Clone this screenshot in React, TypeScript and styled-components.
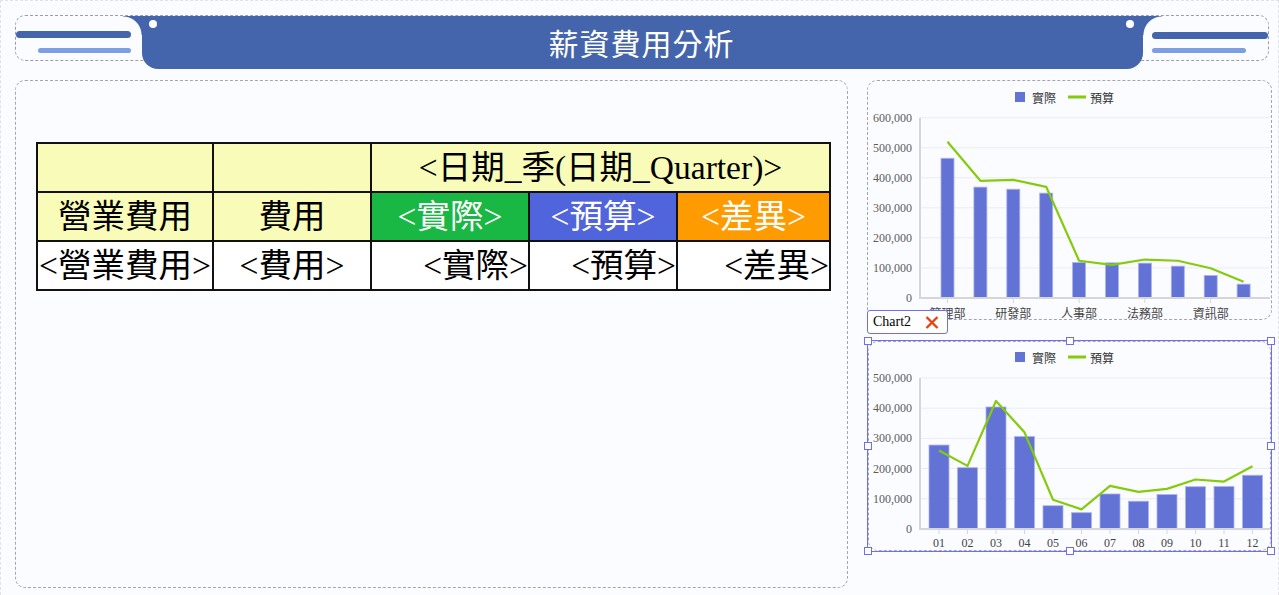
import styled, { createGlobalStyle } from "styled-components";

const GlobalStyle = createGlobalStyle`
  html, body {
    margin: 0;
    padding: 0;
    background: #fbfcff;
  }
  body {
    font-family: "Noto Sans CJK TC", "Noto Sans", sans-serif;
  }
  * {
    box-sizing: border-box;
  }
`;

const BLUE = "#4465ac";
const PAGE_BG = "#fbfcff";
const SELECT = "#6e6ef2";

const Page = styled.div`
  width: 1279px;
  height: 610px;
  border: 1px dashed #e1e1e6;
  padding: 14px 0 0 14px;
`;

const Header = styled.header`
  display: flex;
  align-items: flex-start;
  width: 1254px;
  height: 46px;
  border: 1px dashed #9c9cae;
  border-radius: 10px;
`;

const Deco = styled.div<{ $side: "left" | "right" }>`
  width: ${(p) => (p.$side === "left" ? 126 : 125)}px;
  height: 44px;
  flex: none;
  display: flex;
  flex-direction: column;
  align-items: ${(p) => (p.$side === "left" ? "flex-end" : "flex-start")};
  gap: ${(p) => (p.$side === "left" ? 10 : 9)}px;
  padding: ${(p) => (p.$side === "left" ? "15px 11px 0 0" : "16px 0 0 9px")};
  background: radial-gradient(
      circle at ${(p) => (p.$side === "left" ? "0 100%" : "100% 100%")},
      ${PAGE_BG} 18px,
      ${BLUE} 19px
    )
    ${(p) => (p.$side === "left" ? "right" : "left")} top / 19px 19px no-repeat;
`;

const DecoLine = styled.span<{ $w: number; $light?: boolean }>`
  display: block;
  width: ${(p) => p.$w}px;
  height: ${(p) => (p.$light ? 5 : 7)}px;
  border-radius: 4px;
  background: ${(p) => (p.$light ? "#7b9fe2" : BLUE)};
`;

const TitleBar = styled.div`
  width: 1001px;
  height: 53px;
  flex: none;
  display: flex;
  align-items: flex-start;
  padding: 4px 9px 0 7px;
  background: ${BLUE};
  border-radius: 0 0 16px 16px;
`;

const Dot = styled.span`
  width: 8px;
  height: 8px;
  flex: none;
  border-radius: 50%;
  background: #fff;
`;

const Title = styled.h1`
  flex: 1;
  margin: -4px 0 0;
  line-height: 53px;
  text-align: center;
  color: #fff;
  font-size: 30px;
  font-weight: 400;
  letter-spacing: 1px;
`;

const Main = styled.main`
  display: flex;
  align-items: flex-start;
  gap: 19px;
  margin-top: 19px;
`;

const ReportPanel = styled.section`
  flex: none;
  width: 833px;
  height: 508px;
  padding: 61px 0 0 20px;
  border: 1px dashed #a4a4b6;
  border-radius: 10px;
`;

const Table = styled.table`
  table-layout: fixed;
  width: 795px;
  border-collapse: separate;
  border-spacing: 0;
  border-top: 2px solid #111;
  border-left: 2px solid #111;
  font-family: "Liberation Serif", "Noto Sans CJK TC", serif;
  font-size: 33.5px;
`;

const Col = styled.col<{ $w: number }>`
  width: ${(p) => p.$w}px;
`;

type Tone = "head" | "green" | "blue" | "orange" | "plain";

const toneBg: Record<Tone, string> = {
  head: "#f8fcb8",
  green: "#19b743",
  blue: "#5064dc",
  orange: "#fe9b00",
  plain: "#ffffff",
};

const Cell = styled.td<{ $tone: Tone; $align?: "center" | "right" }>`
  height: 49px;
  padding: 0;
  border-right: 2px solid #111;
  border-bottom: 2px solid #111;
  background: ${(p) => toneBg[p.$tone]};
  color: ${(p) => (p.$tone === "head" || p.$tone === "plain" ? "#000" : "#fff")};
  text-align: ${(p) => p.$align ?? "center"};
  line-height: 47px;
  white-space: nowrap;
  overflow: visible;
`;

const SideColumn = styled.aside`
  flex: none;
  width: 405px;
  display: flex;
  flex-direction: column;
`;

const ChartCard = styled.div<{ $h: number }>`
  width: 100%;
  height: ${(p) => p.$h}px;
  border: 1px dashed #a4a4b6;
  border-radius: 10px;
  overflow: hidden;
  svg {
    display: block;
  }
`;

const ChartTag = styled.div`
  position: relative;
  z-index: 1;
  display: flex;
  align-items: center;
  justify-content: space-between;
  width: 81px;
  height: 24px;
  margin-top: -10px;
  padding: 0 8px 0 5px;
  background: #fff;
  border: 1px solid ${SELECT};
  border-radius: 3px;
  font-family: "Liberation Serif", serif;
  font-size: 14px;
  color: #000;
`;

const SelectFrame = styled.div`
  position: relative;
  height: 212px;
  margin-top: 6px;
  border: 1px solid ${SELECT};
`;

type Spot = "start" | "mid" | "end";

const place = (s: Spot, a: string, b: string) =>
  s === "start" ? `${a}: -4px;` : s === "end" ? `${b}: -4px;` : `${a}: calc(50% - 4px);`;

const Handle = styled.span<{ $x: Spot; $y: Spot }>`
  position: absolute;
  width: 8px;
  height: 8px;
  background: #fff;
  border: 1px solid ${SELECT};
  ${(p) => place(p.$x, "left", "right")}
  ${(p) => place(p.$y, "top", "bottom")}
`;

type ChartSpec = {
  width: number;
  height: number;
  legendX: number;
  legendY: number;
  labelRight: number;
  axisX: number;
  right: number;
  top: number;
  bottom: number;
  max: number;
  tickStep: number;
  firstX: number;
  step: number;
  barW: number;
  labels: string[];
  labelEvery: number;
  labelY: number;
  labelFont: string;
  actual: number[];
  budget: number[];
};

const deptChart: ChartSpec = {
  width: 403,
  height: 238,
  legendX: 147,
  legendY: 11,
  labelRight: 44,
  axisX: 52,
  right: 402,
  top: 36.7,
  bottom: 217,
  max: 600000,
  tickStep: 100000,
  firstX: 79.5,
  step: 32.9,
  barW: 13,
  labels: ["管理部", "", "研發部", "", "人事部", "", "法務部", "", "資訊部", ""],
  labelEvery: 2,
  labelY: 231,
  labelFont: '"Noto Sans CJK TC", sans-serif',
  actual: [465, 369, 362, 349, 118, 117, 116, 106, 75, 46],
  budget: [520, 390, 393, 370, 124, 110, 128, 124, 99, 54],
};

const monthChart: ChartSpec = {
  width: 403,
  height: 208,
  legendX: 146,
  legendY: 10,
  labelRight: 43,
  axisX: 51,
  right: 402,
  top: 36,
  bottom: 187,
  max: 500000,
  tickStep: 100000,
  firstX: 70,
  step: 28.5,
  barW: 20,
  labels: ["01", "02", "03", "04", "05", "06", "07", "08", "09", "10", "11", "12"],
  labelEvery: 1,
  labelY: 201,
  labelFont: '"Liberation Serif", serif',
  actual: [278, 203, 404, 306, 77, 54, 116, 92, 114, 140, 141, 178],
  budget: [260, 209, 424, 320, 97, 65, 143, 123, 133, 164, 157, 208],
};

function BarLineChart({ spec }: { spec: ChartSpec }) {
  const s = spec;
  const y = (v: number) => s.bottom - ((v * 1000) / s.max) * (s.bottom - s.top);
  const cx = (i: number) => s.firstX + i * s.step;
  const ticks: number[] = [];
  for (let v = 0; v <= s.max; v += s.tickStep) ticks.push(v);
  const line = s.budget.map((v, i) => `${cx(i)},${y(v)}`).join(" ");

  return (
    <svg width={s.width} height={s.height}>
      {/* legend */}
      <rect x={s.legendX} y={s.legendY} width={10} height={10} fill="#6372d5" />
      <text
        x={s.legendX + 17}
        y={s.legendY + 5}
        dominantBaseline="central"
        fontSize={12}
        fill="#333"
        fontFamily='"Noto Sans CJK TC", sans-serif'
      >
        實際
      </text>
      <line
        x1={s.legendX + 53}
        x2={s.legendX + 71}
        y1={s.legendY + 5}
        y2={s.legendY + 5}
        stroke="#84cc0a"
        strokeWidth={3}
      />
      <text
        x={s.legendX + 75}
        y={s.legendY + 5}
        dominantBaseline="central"
        fontSize={12}
        fill="#333"
        fontFamily='"Noto Sans CJK TC", sans-serif'
      >
        預算
      </text>

      {ticks.map((t) => (
        <g key={t}>
          {t > 0 && (
            <line x1={s.axisX} x2={s.right} y1={y(t / 1000)} y2={y(t / 1000)} stroke="#ececef" />
          )}
          <text
            x={s.labelRight}
            y={y(t / 1000)}
            textAnchor="end"
            dominantBaseline="central"
            fontSize={12}
            fill="#5c5c5c"
            fontFamily='"Liberation Serif", serif'
          >
            {t.toLocaleString("en-US")}
          </text>
        </g>
      ))}

      {s.actual.map((v, i) => (
        <rect
          key={i}
          x={cx(i) - s.barW / 2}
          y={y(v)}
          width={s.barW}
          height={s.bottom - y(v)}
          fill="#6372d5"
          stroke="#aab3ee"
          strokeWidth={0.8}
        />
      ))}

      <line x1={s.axisX} x2={s.axisX} y1={s.top} y2={s.bottom + 1} stroke="#d6d6d9" strokeWidth={2} />
      <line x1={s.axisX} x2={s.right} y1={s.bottom} y2={s.bottom} stroke="#d6d6d9" strokeWidth={2} />

      <polyline points={line} fill="none" stroke="#84cc0a" strokeWidth={2.2} strokeLinejoin="round" />

      {s.labels.map((l, i) =>
        i % s.labelEvery === 0 ? (
          <g key={i}>
            <line x1={cx(i)} x2={cx(i)} y1={s.bottom} y2={s.bottom + 5} stroke="#d6d6d9" />
            <text
              x={cx(i)}
              y={s.labelY}
              textAnchor="middle"
              dominantBaseline="central"
              fontSize={12}
              fill="#444"
              fontFamily={s.labelFont}
            >
              {l}
            </text>
          </g>
        ) : null
      )}
    </svg>
  );
}

const handles: [Spot, Spot][] = [
  ["start", "start"],
  ["mid", "start"],
  ["end", "start"],
  ["start", "mid"],
  ["end", "mid"],
  ["start", "end"],
  ["mid", "end"],
  ["end", "end"],
];

export default function App() {
  return (
    <>
      <GlobalStyle />
      <Page>
        <Header>
          <Deco $side="left">
            <DecoLine $w={115} />
            <DecoLine $w={93} $light />
          </Deco>
          <TitleBar>
            <Dot />
            <Title>薪資費用分析</Title>
            <Dot />
          </TitleBar>
          <Deco $side="right">
            <DecoLine $w={116} />
            <DecoLine $w={94} $light />
          </Deco>
        </Header>

        <Main>
          <ReportPanel>
            <Table>
              <colgroup>
                <Col $w={176} />
                <Col $w={158} />
                <Col $w={158} />
                <Col $w={148} />
                <Col $w={153} />
              </colgroup>
              <tbody>
                <tr>
                  <Cell $tone="head" />
                  <Cell $tone="head" />
                  <Cell $tone="head" colSpan={3}>
                    &lt;日期_季(日期_Quarter)&gt;
                  </Cell>
                </tr>
                <tr>
                  <Cell $tone="head">營業費用</Cell>
                  <Cell $tone="head">費用</Cell>
                  <Cell $tone="green">&lt;實際&gt;</Cell>
                  <Cell $tone="blue">&lt;預算&gt;</Cell>
                  <Cell $tone="orange">&lt;差異&gt;</Cell>
                </tr>
                <tr>
                  <Cell $tone="plain">&lt;營業費用&gt;</Cell>
                  <Cell $tone="plain">&lt;費用&gt;</Cell>
                  <Cell $tone="plain" $align="right">&lt;實際&gt;</Cell>
                  <Cell $tone="plain" $align="right">&lt;預算&gt;</Cell>
                  <Cell $tone="plain" $align="right">&lt;差異&gt;</Cell>
                </tr>
              </tbody>
            </Table>
          </ReportPanel>

          <SideColumn>
            <ChartCard $h={240}>
              <BarLineChart spec={deptChart} />
            </ChartCard>
            <ChartTag>
              Chart2
              <svg width="14" height="13" viewBox="0 0 14 13">
                <path d="M1.5 1 L12.5 12 M12.5 1 L1.5 12" stroke="#e8430f" strokeWidth="2.4" />
              </svg>
            </ChartTag>
            <SelectFrame>
              <ChartCard $h={210}>
                <BarLineChart spec={monthChart} />
              </ChartCard>
              {handles.map(([x, y]) => (
                <Handle key={x + y} $x={x} $y={y} />
              ))}
            </SelectFrame>
          </SideColumn>
        </Main>
      </Page>
    </>
  );
}
